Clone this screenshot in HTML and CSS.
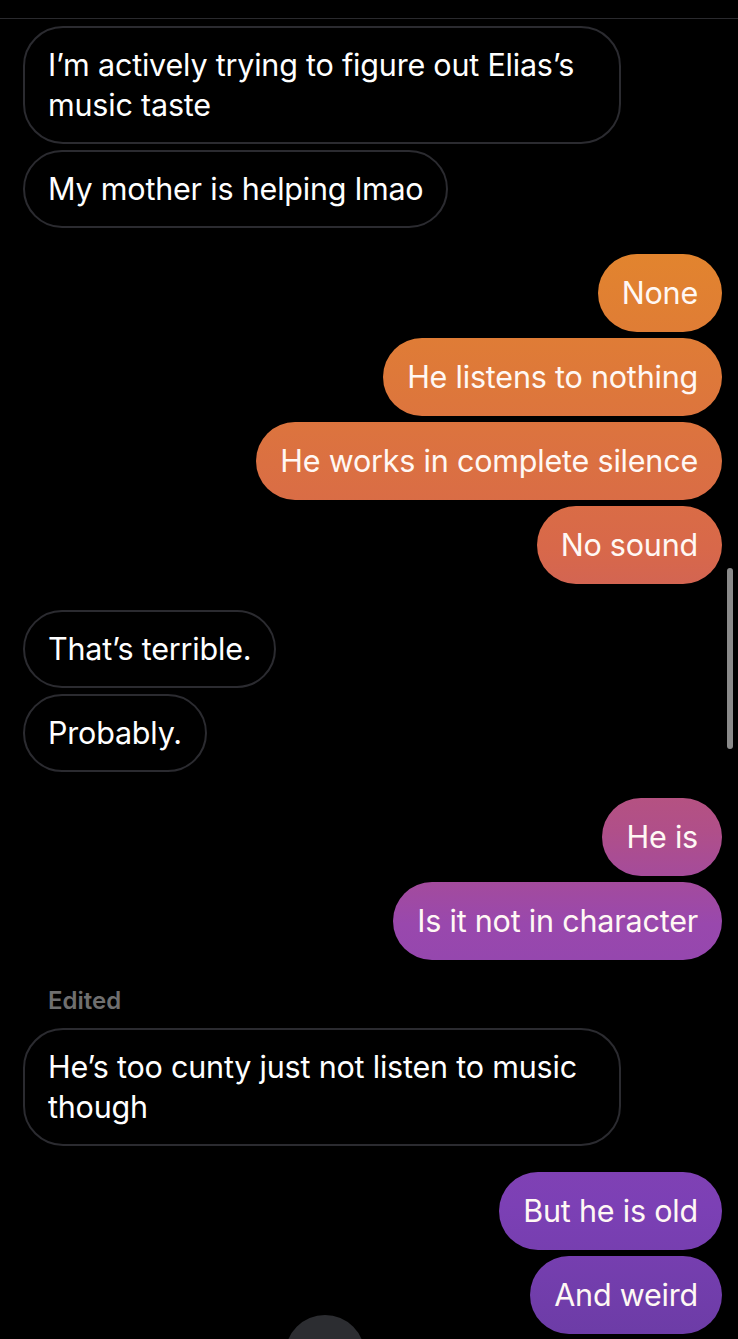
FILE: index.html
```html
<!DOCTYPE html>
<html lang="en">
<head>
    <meta charset="UTF-8">
    <meta name="viewport" content="width=device-width, initial-scale=1.0">
    <title>Chat</title>
    <link rel="stylesheet" href="styles.css">
</head>
<body>
    <div class="topbar"></div>

    <div class="thread">
        <div class="group theirs">
            <div class="bubble">I’m actively trying to figure out Elias’s music taste</div>
            <div class="bubble">My mother is helping lmao</div>
        </div>

        <div class="group mine">
            <div class="bubble">None</div>
            <div class="bubble">He listens to nothing</div>
            <div class="bubble">He works in complete silence</div>
            <div class="bubble">No sound</div>
        </div>

        <div class="group theirs">
            <div class="bubble">That’s terrible.</div>
            <div class="bubble">Probably.</div>
        </div>

        <div class="group mine">
            <div class="bubble">He is</div>
            <div class="bubble">Is it not in character</div>
        </div>

        <div class="group theirs">
            <div class="edited">Edited</div>
            <div class="bubble">He’s too cunty just not listen to music though</div>
        </div>

        <div class="group mine">
            <div class="bubble">But he is old</div>
            <div class="bubble">And weird</div>
        </div>
    </div>

    <div class="scrollbar"></div>
    <div class="jump-btn"></div>
</body>
</html>
```

FILE: styles.css
```css
/* Page */
body {
    margin: 0;
    background: #000;
    color: #fff;
    font-family: 'Inter', 'Roboto', sans-serif;
    height: 1339px;
    overflow: hidden;
}

.topbar {
    height: 18px;
    border-bottom: 1px solid #2a2a2e;
}

/* Thread */
.thread {
    display: flex;
    flex-direction: column;
    gap: 26px;
    padding: 7px 16px 0 23px;
}

.group {
    display: flex;
    flex-direction: column;
    gap: 6px;
}

.group.theirs {
    align-items: flex-start;
}

.group.mine {
    align-items: flex-end;
}

/* Bubbles */
.bubble {
    max-width: 548px;
    padding: 19px 24px;
    border-radius: 40px;
    font-size: 30.5px;
    letter-spacing: -0.2px;
    line-height: 40px;
}

.theirs .bubble {
    border: 2px solid #2b2b30;
    padding: 17px 23px;
}

.mine .bubble {
    color: #fff8f4;
    background: linear-gradient(to bottom,
        #f08b24 0%,
        #e2842e 19%,
        #d8684a 41%,
        #b04f89 62%,
        #9948ad 69%,
        #7c40b5 90%,
        #6c3ca6 100%);
    background-attachment: fixed;
}

.edited {
    padding-left: 25px;
    margin-bottom: 6px;
    font-size: 24px;
    font-weight: 600;
    line-height: 30px;
    color: #6f6f6f;
}

/* Overlays */
.scrollbar {
    position: fixed;
    top: 568px;
    right: 5px;
    width: 6px;
    height: 181px;
    border-radius: 3px;
    background: #8a8a8a;
}

.jump-btn {
    position: fixed;
    top: 1315px;
    left: 285px;
    width: 80px;
    height: 80px;
    border-radius: 50%;
    background: #2c2d31;
}
```
